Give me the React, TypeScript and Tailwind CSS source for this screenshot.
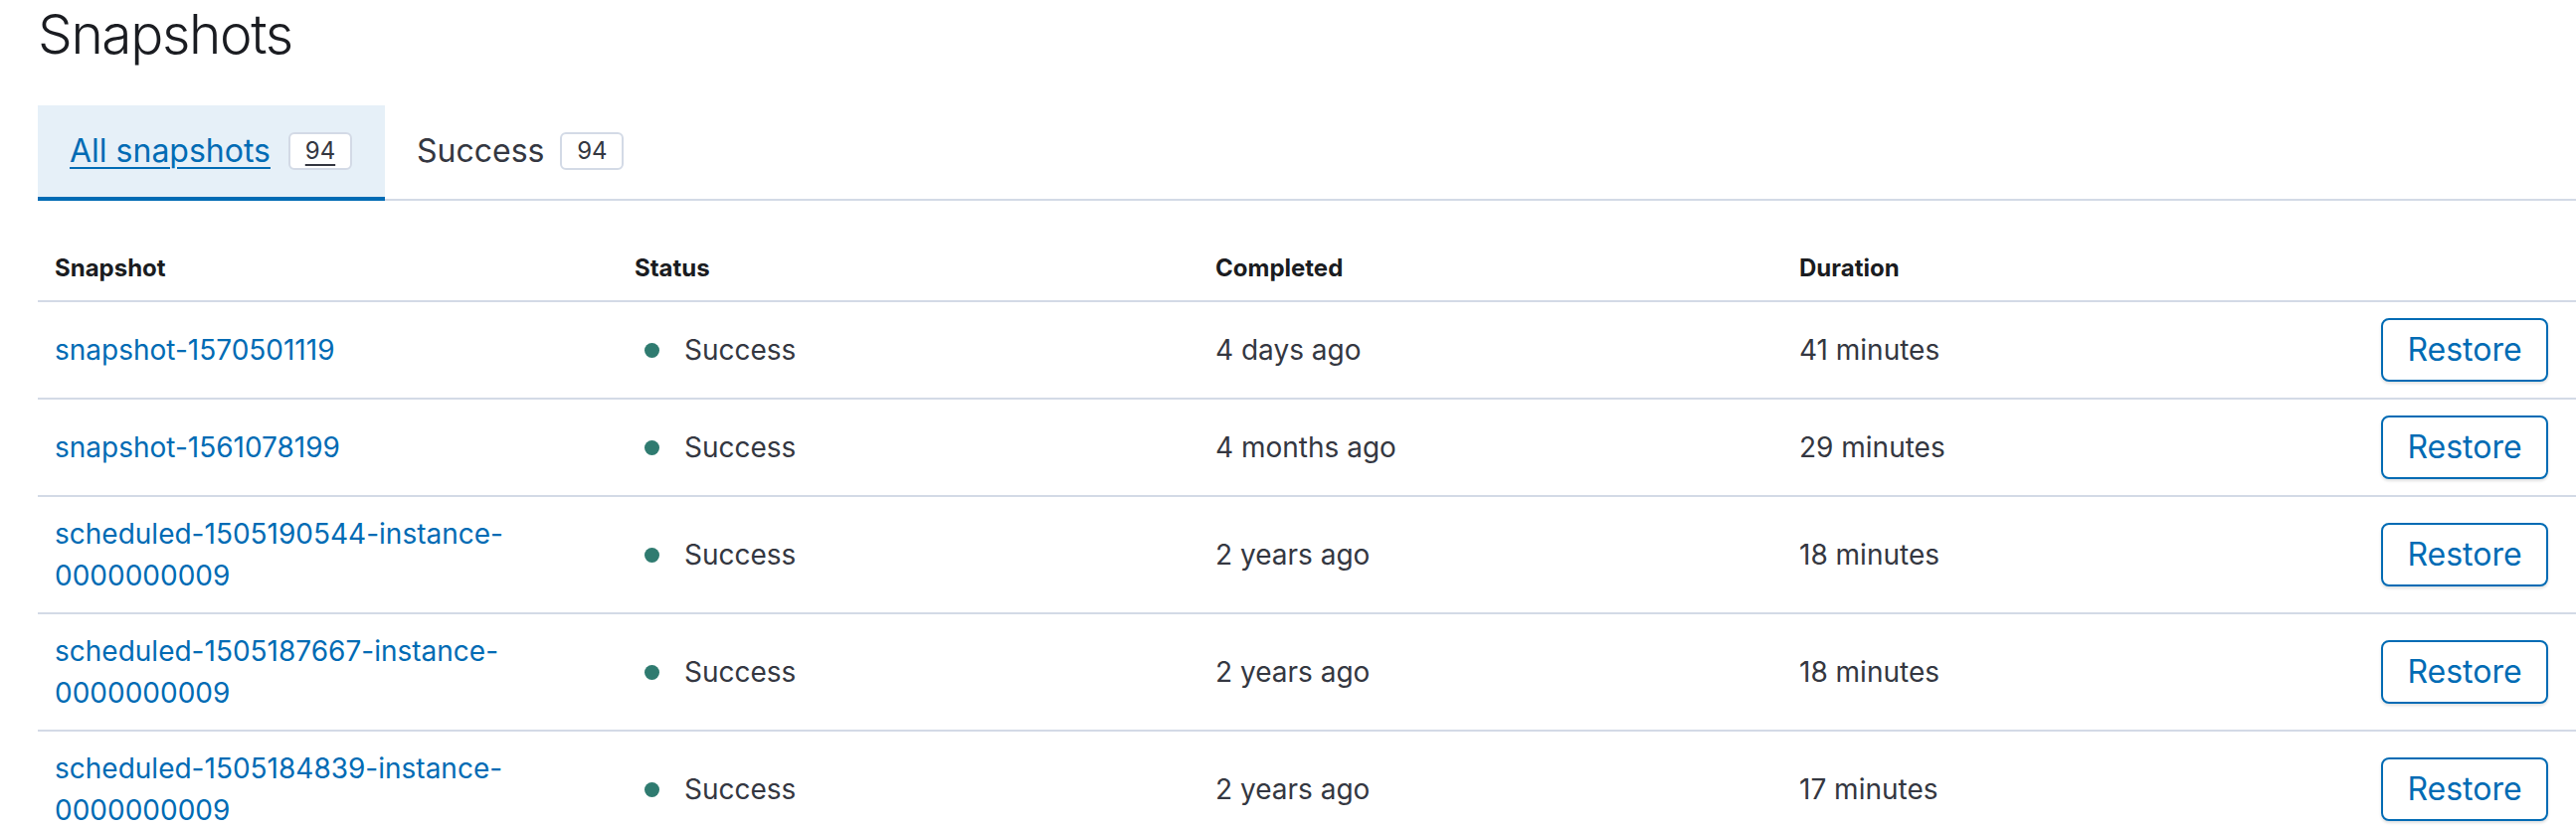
import type { JSX } from 'react';

type Snapshot = {
  name: string[];
  completed: string;
  duration: string;
};

const snapshots: Snapshot[] = [
  { name: ['snapshot-1570501119'], completed: '4 days ago', duration: '41 minutes' },
  { name: ['snapshot-1561078199'], completed: '4 months ago', duration: '29 minutes' },
  { name: ['scheduled-1505190544-instance-', '0000000009'], completed: '2 years ago', duration: '18 minutes' },
  { name: ['scheduled-1505187667-instance-', '0000000009'], completed: '2 years ago', duration: '18 minutes' },
  { name: ['scheduled-1505184839-instance-', '0000000009'], completed: '2 years ago', duration: '17 minutes' },
];

function CountBadge({ count, active }: { count: number; active?: boolean }): JSX.Element {
  return (
    <span
      className={`inline-flex h-[38px] w-[64px] items-center justify-center rounded-[6px] border-2 border-[#d3dae6] bg-white text-[24px] text-[#343741] ${
        active ? 'underline underline-offset-[5px] decoration-2' : ''
      }`}
    >
      {count}
    </span>
  );
}

export default function App(): JSX.Element {
  return (
    <div className="min-h-screen w-[2590px] bg-white pl-[38px] font-['Inter',sans-serif] text-[#343741]">
      {/* Title */}
      <h1 className="text-[55px] font-light leading-[68px] tracking-[-0.025em] text-[#1a1c21]">
        Snapshots
      </h1>

      {/* Tabs */}
      <div className="mt-[38px] flex border-b-2 border-[#d3dae6]">
        <button className="-mb-[2px] flex h-[96px] items-center gap-[18px] border-b-4 border-[#006bb4] bg-[#e6f0f8] pl-[32px] pr-[33px]">
          <span className="text-[32px] text-[#006bb4] underline underline-offset-[5px] decoration-2">
            All snapshots
          </span>
          <CountBadge count={94} active />
        </button>
        <button className="-mb-[2px] flex h-[96px] items-center gap-[16px] border-b-4 border-transparent pl-[32px] pr-[32px]">
          <span className="text-[32px] text-[#343741]">Success</span>
          <CountBadge count={94} />
        </button>
      </div>

      {/* Table */}
      <table className="mt-[35px] w-[2552px] table-fixed border-collapse">
        <colgroup>
          <col className="w-[584px]" />
          <col className="w-[584px]" />
          <col className="w-[587px]" />
          <col className="w-[597px]" />
          <col />
        </colgroup>
        <thead>
          <tr className="border-b-2 border-[#d3dae6]">
            <th className="h-[66px] pl-[17px] text-left text-[24px] font-bold text-[#1a1c21]">Snapshot</th>
            <th className="h-[66px] pl-[16px] text-left text-[24px] font-bold text-[#1a1c21]">Status</th>
            <th className="h-[66px] pl-[16px] text-left text-[24px] font-bold text-[#1a1c21]">Completed</th>
            <th className="h-[66px] pl-[16px] text-left text-[24px] font-bold text-[#1a1c21]">Duration</th>
            <th className="h-[66px]" />
          </tr>
        </thead>
        <tbody>
          {snapshots.map((s) => (
            <tr key={s.name.join('')} className="border-b-2 border-[#d3dae6]">
              <td className="py-[16px] pl-[17px] align-middle text-[28px] leading-[42px]">
                <a href="#" className="text-[#006bb4]">
                  {s.name.map((part, i) => (
                    <span key={i} className="block">
                      {part}
                    </span>
                  ))}
                </a>
              </td>
              <td className="py-[16px] pl-[26px] align-middle text-[28px] leading-[42px]">
                <span className="flex items-center gap-[25px]">
                  <span className="h-[15px] w-[15px] rounded-full bg-[#2f7b70]" />
                  <span className="text-[#343741]">Success</span>
                </span>
              </td>
              <td className="py-[16px] pl-[16px] align-middle text-[28px] leading-[42px]">{s.completed}</td>
              <td className="py-[16px] pl-[16px] align-middle text-[28px] leading-[42px]">{s.duration}</td>
              <td className="py-[16px] pr-[28px] text-right align-middle">
                <button className="h-[64px] w-[168px] rounded-[8px] border-2 border-[#006bb4] bg-white text-[32px] text-[#006bb4] shadow-[0_2px_3px_rgba(0,0,0,0.12)]">
                  Restore
                </button>
              </td>
            </tr>
          ))}
        </tbody>
      </table>
    </div>
  );
}
